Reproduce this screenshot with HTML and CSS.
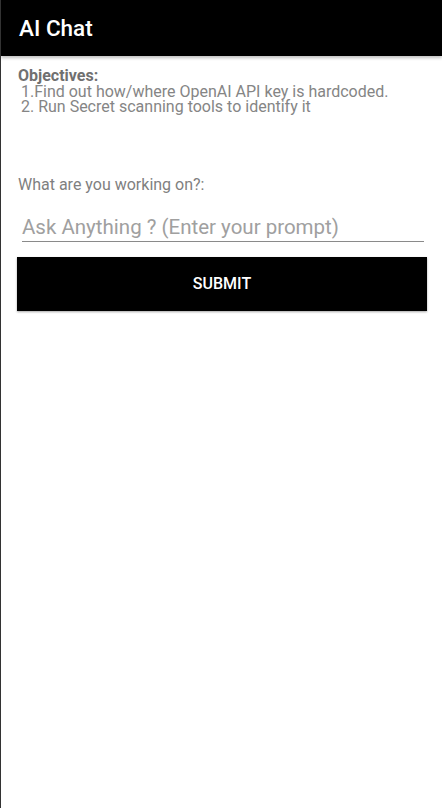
FILE: index.html
```html
<!DOCTYPE html>
<html>
<head>
<meta charset="utf-8">
<link rel="stylesheet" href="styles.css">
</head>
<body>
<div class="app">
  <header class="bar"><h1 class="title">AI Chat</h1></header>
  <main class="content">
    <div class="objectives">
      <div class="obj-head">Objectives:</div>
      <div class="obj-line"> 1.Find out how/where OpenAI API key is hardcoded.</div>
      <div class="obj-line"> 2. Run Secret scanning tools to identify it</div>
    </div>
    <div class="label">What are you working on?:</div>
    <div class="field"><span class="placeholder">Ask Anything ? (Enter your prompt)</span></div>
    <button class="submit">SUBMIT</button>
  </main>
</div>
</body>
</html>
```
FILE: styles.css
```css
html, body { margin: 0; padding: 0; background: #fff; }
body { font-family: Roboto, "Liberation Sans", sans-serif; }
.app { width: 442px; height: 808px; border-left: 1px solid #333; box-sizing: border-box; overflow: hidden; }
.bar { height: 56px; background: #000; display: flex; align-items: center; padding-left: 18px; box-shadow: 0 2px 3px rgba(0,0,0,0.25); position: relative; }
.title { margin: 0; color: #fff; font-size: 22.5px; font-weight: 500; }
.content { padding: 0 14px 0 16px; }
.objectives { padding-top: 12px; color: #7a7a7a; font-size: 16px; line-height: 15.5px; }
.obj-head { font-weight: 700; color: #707070; padding-left: 1px; }
.obj-line { white-space: pre; color: #858585; }
.label { margin-top: 60px; color: #7f7f7f; font-size: 16px; line-height: 19px; padding-left: 1px; }
.field { margin: 21px 4px 0 5px; border-bottom: 1px solid #8a8a8a; height: 27px; box-sizing: border-box; display: flex; align-items: flex-start; }
.placeholder { color: #a0a0a0; font-size: 20.5px; line-height: 24px; }
.submit { display: block; margin-top: 15px; width: 410px; height: 54px; background: #000; color: #fff; border: none; font-family: Roboto, "Liberation Sans", sans-serif; font-size: 16px; font-weight: 500; box-shadow: 0 1px 2px rgba(0,0,0,0.35); padding: 0; }
```
